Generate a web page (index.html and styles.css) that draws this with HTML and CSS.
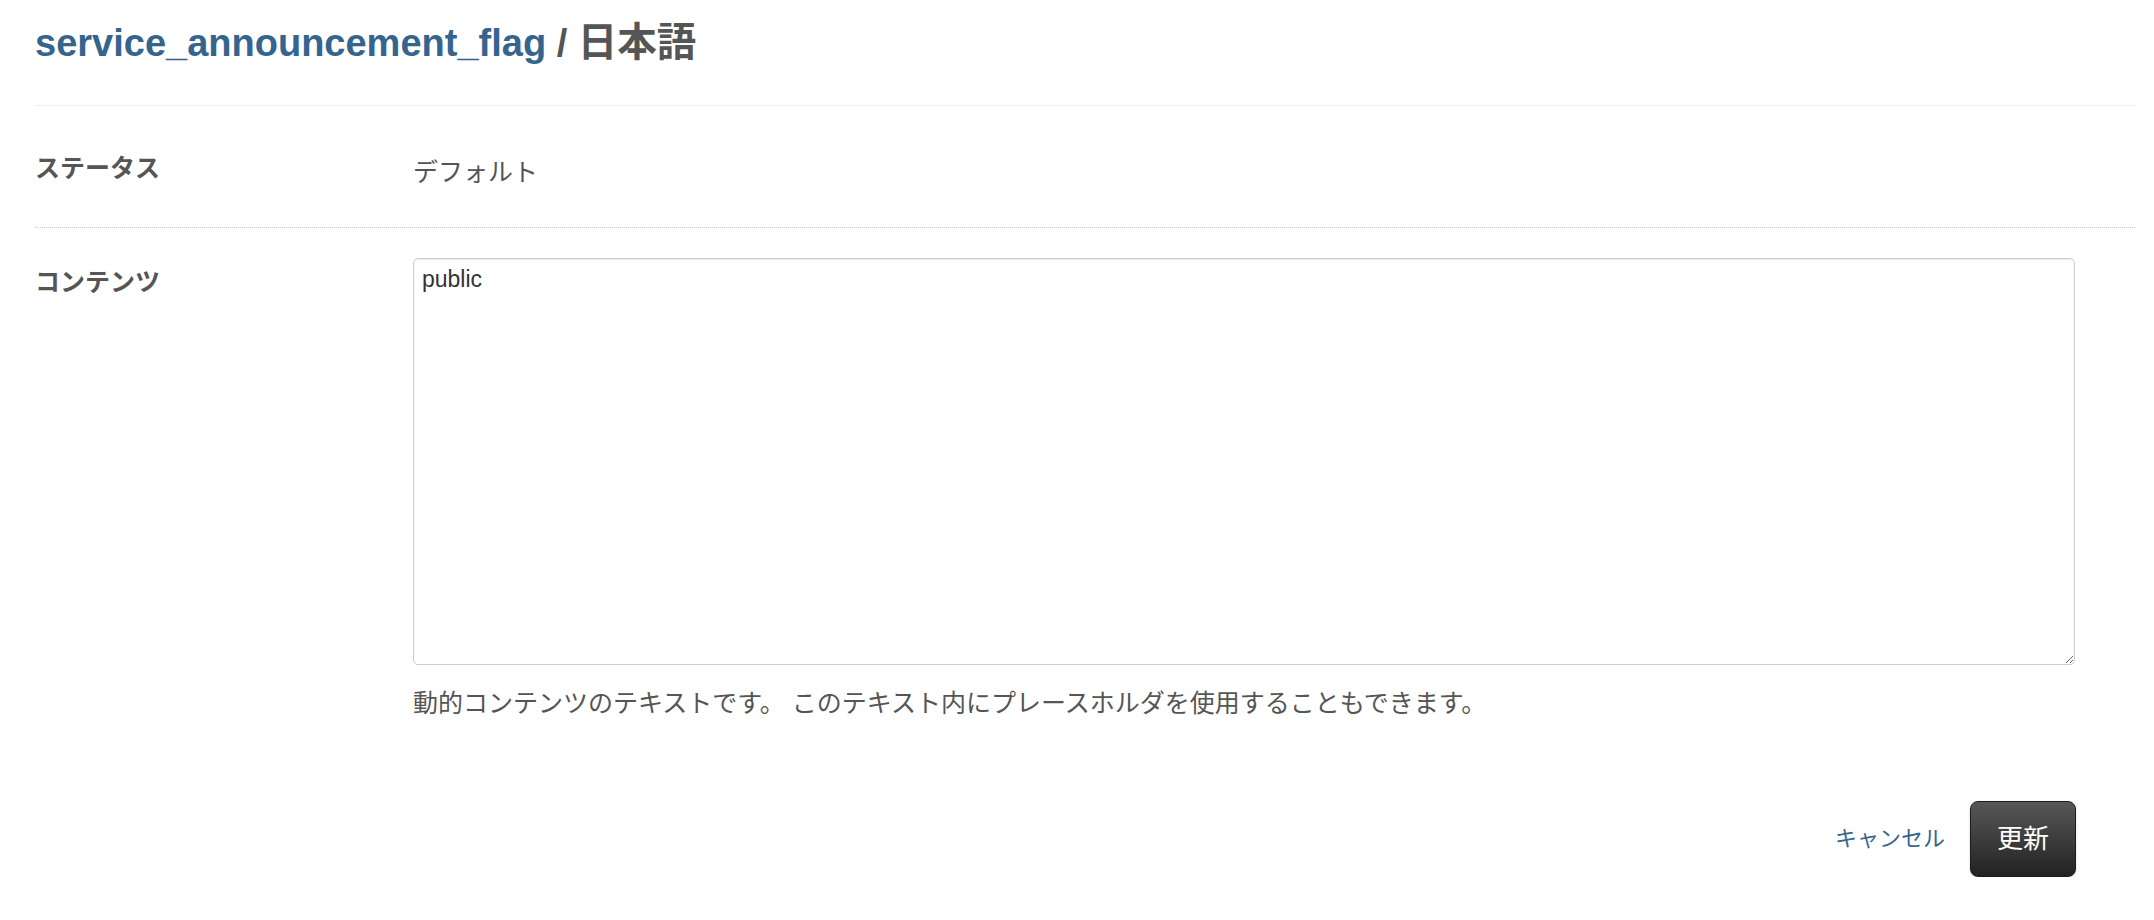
FILE: index.html
```html
<!DOCTYPE html>
<html lang="ja">
<head>
<meta charset="utf-8">
<title>service_announcement_flag / 日本語</title>
<link rel="stylesheet" href="styles.css">
</head>
<body>
<div class="page">
  <h1 class="title"><a class="title-link" href="#">service_announcement_flag</a> / <span class="title-rest">日本語</span></h1>
  <div class="row row-status">
    <div class="label">ステータス</div>
    <div class="value">デフォルト</div>
  </div>
  <div class="row row-content">
    <div class="label">コンテンツ</div>
    <div class="field">
      <textarea class="textarea">public</textarea>
      <p class="help">動的コンテンツのテキストです。 このテキスト内にプレースホルダを使用することもできます。</p>
    </div>
  </div>
  <div class="actions">
    <a class="cancel" href="#">キャンセル</a>
    <button class="btn-update" type="button">更新</button>
  </div>
</div>
</body>
</html>
```

FILE: styles.css
```css
html, body {
  margin: 0;
  padding: 0;
  background: #fff;
}

body {
  font-family: "Liberation Sans", "Noto Sans CJK JP", sans-serif;
  color: #555;
  font-size: 25px;
}

.page {
  padding: 0 19px 0 35px;
}

.title {
  box-sizing: border-box;
  height: 106px;
  margin: 0;
  padding-top: 20px;
  font-size: 38px;
  line-height: 44px;
  font-weight: bold;
  color: #555;
  border-bottom: 1px solid #eee;
}

.title-link {
  color: #35658f;
  text-decoration: none;
}

.title-rest {
  font-size: 39.5px;
}

.row {
  display: grid;
  grid-template-columns: 378px 1662px;
}

.row-status {
  box-sizing: border-box;
  height: 122px;
  border-bottom: 1px dotted #c8c8c8;
}

.label {
  font-weight: bold;
  font-size: 25px;
  line-height: 36px;
}

.row-status .label {
  padding-top: 44px;
}

.row-status .value {
  padding-top: 48px;
  line-height: 36px;
}

.row-content {
  padding-top: 30px;
}

.row-content .label {
  padding-top: 6px;
}

.field {
  display: flex;
  flex-direction: column;
}

.textarea {
  box-sizing: border-box;
  width: 1662px;
  height: 407px;
  margin: 0;
  padding: 4px 8px;
  border: 1px solid #ccc;
  border-radius: 5px;
  box-shadow: inset 0 1px 1px rgba(0, 0, 0, 0.075);
  font-family: "Liberation Sans", "Noto Sans CJK JP", sans-serif;
  font-size: 23px;
  line-height: 32px;
  color: #333;
  resize: both;
}

.help {
  margin: 20px 0 0;
  font-size: 25px;
  line-height: 36px;
  color: #555;
}

.actions {
  display: flex;
  justify-content: flex-end;
  align-items: center;
  gap: 25px;
  margin-top: 80px;
  padding-right: 59px;
}

.cancel {
  color: #35658f;
  text-decoration: none;
  font-size: 22px;
  line-height: 30px;
}

.btn-update {
  box-sizing: border-box;
  height: 76px;
  padding: 0 26px;
  border: 1px solid #1c1c1c;
  border-radius: 8px;
  background: linear-gradient(to bottom, #575757, #222);
  box-shadow: 0 1px 3px rgba(0, 0, 0, 0.15);
  color: #fff;
  font-family: "Liberation Sans", "Noto Sans CJK JP", sans-serif;
  font-size: 26px;
  line-height: 36px;
}
```
